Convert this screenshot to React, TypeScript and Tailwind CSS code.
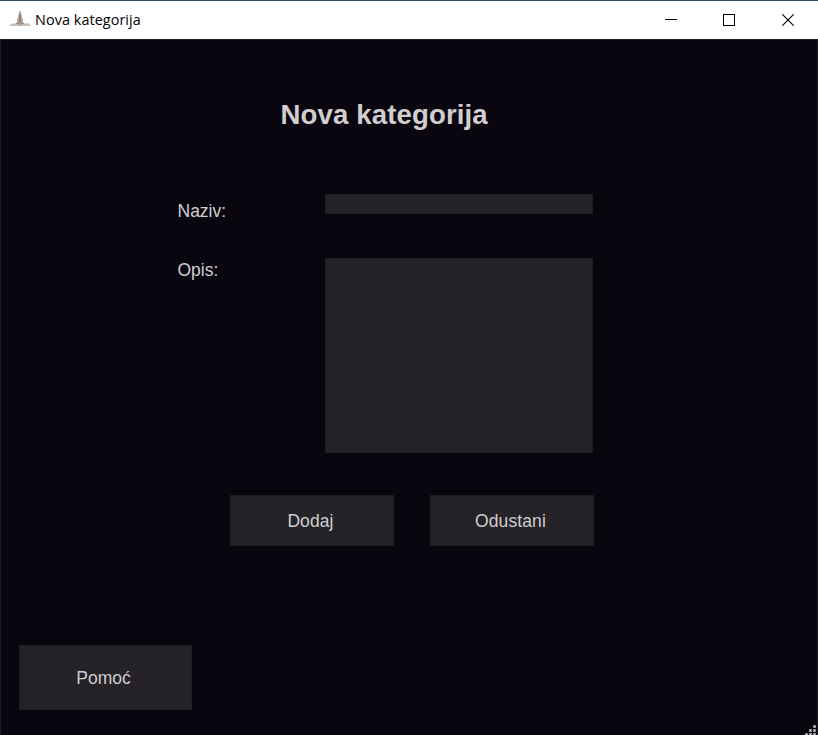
import type { ReactNode } from "react";

function TowerIcon() {
  return (
    <svg width="20" height="16" viewBox="0 0 20 16" aria-hidden="true">
      <path d="M0 15V13.4L3 12.2L5 12.6L7 11.6H13L15 12.6L18 12L20 13.4V15Z" fill="#cdc4be" />
      <path d="M7 14V8L8.2 6.5V4L9.6 0H10.6L11.8 4V6.5L13 8V14Z" fill="#b5aaa3" />
      <path d="M9 12V4.5L10 2L11 4.5V12Z" fill="#8f837d" />
      <path d="M1 14.5H19" stroke="#c3b9b2" />
      <path d="M6 12.5H9M11 12.5H14" stroke="#94877f" />
    </svg>
  );
}

function TitleBar() {
  return (
    <header className="flex h-[39px] shrink-0 items-start border-t border-[#29506b] bg-white pl-[10px]">
      <div className="mt-[10px]">
        <TowerIcon />
      </div>
      <span className="ml-[5px] mt-[9px] whitespace-nowrap font-['Open_Sans','Noto_Sans',sans-serif] text-[14.4px] leading-5 tracking-[0.07px] text-black">
        Nova kategorija
      </span>
      <div className="ml-auto mr-[24px] mt-[13px] flex gap-[46px]">
        <svg width="12" height="12" viewBox="0 0 12 12" shapeRendering="crispEdges">
          <path d="M0 5.5H12" stroke="#000" />
        </svg>
        <svg width="12" height="12" viewBox="0 0 12 12" shapeRendering="crispEdges">
          <rect x=".5" y=".5" width="11" height="11" fill="none" stroke="#000" />
        </svg>
        <svg className="ml-px" width="12" height="12" viewBox="0 0 12 12">
          <path d="M.2 .2L11.8 11.8M11.8 .2L.2 11.8" stroke="#000" strokeWidth="1.1" />
        </svg>
      </div>
    </header>
  );
}

function Button({ className, children }: { className: string; children: ReactNode }) {
  return (
    <button className={`flex items-center justify-center border border-[#1e1b21] bg-[#252228] text-[#d0cecf] ${className}`}>
      {children}
    </button>
  );
}

function SizeGrip() {
  return (
    <svg width="11" height="10" viewBox="0 0 11 10" shapeRendering="crispEdges">
      {[[8, 0], [4, 4], [8, 4], [0, 8], [4, 8], [8, 8]].map(([x, y]) => (
        <g key={`${x}-${y}`}>
          <rect x={x} y={y} width="3" height="3" fill="#8d8b8e" />
          <rect x={x + 1} y={y + 1} width="1" height="1" fill="#d6d5d6" />
        </g>
      ))}
    </svg>
  );
}

export default function App() {
  return (
    <div className="flex h-[735px] w-[818px] flex-col overflow-hidden bg-[#09060f]">
      <TitleBar />
      <main className="flex flex-1 flex-col border-x border-t border-[#1f1d25] font-['Liberation_Sans',Arial,sans-serif] text-[17.5px] leading-5 text-[#d0cecf]">
        <h1 className="ml-[279.5px] mt-[59px] whitespace-nowrap text-[27.6px] font-bold leading-8 tracking-[0.12px]">Nova kategorija</h1>
        <form className="ml-[176.5px] mt-[63px] grid w-[415.5px] grid-cols-[147.5px_268px]">
          <label htmlFor="naziv" className="mt-[7px]">Naziv:</label>
          <input id="naziv" className="h-5 border border-[#1e1b21] bg-[#252228] px-1 outline-none" />
          <label htmlFor="opis" className="mt-[39px]">Opis:</label>
          <textarea id="opis" className="mt-[37px] block h-[195px] resize-none border border-[#1e1b21] bg-[#252228] p-1 outline-none" />
        </form>
        <div className="ml-[229px] mt-[42px] flex gap-9 tracking-[0.1px]">
          <Button className="h-[51px] w-[164px] pr-[3px]">Dodaj</Button>
          <Button className="h-[51px] w-[164px] pr-[3px]">Odustani</Button>
        </div>
        <footer className="mt-auto flex items-end justify-between pl-[18px] pr-px">
          <Button className="mb-[25px] h-[65px] w-[173px] pr-[4px]">Pomoć</Button>
          <SizeGrip />
        </footer>
      </main>
    </div>
  );
}
